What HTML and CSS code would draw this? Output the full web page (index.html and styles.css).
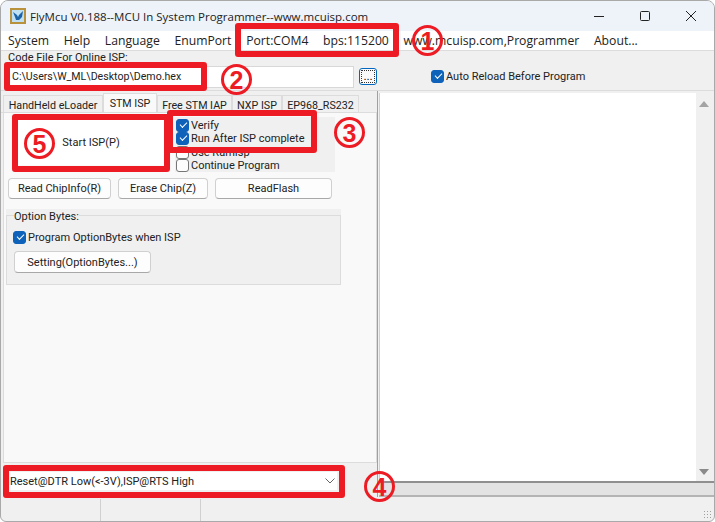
FILE: index.html
```html
<!DOCTYPE html>
<html lang="en">
<head>
  <meta charset="UTF-8">
  <title>FlyMcu</title>
  <link rel="stylesheet" href="styles.css">
</head>
<body>

<div class="window">
  <!-- Title bar -->
  <div class="titlebar">
    <svg class="app-icon" width="16" height="16" viewBox="0 0 16 16">
      <rect x="0" y="0" width="16" height="16" fill="#b8923c"/>
      <rect x="2" y="2" width="12" height="12" fill="#bfe0f2"/>
      <path d="M3 4 L7 7 L8 9 L9 7 L13 3 L12 9 L9 12 L6 12 L5 9 Z" fill="#1c62a8"/>
    </svg>
    <span class="title-text">FlyMcu V0.188--MCU In System Programmer--www.mcuisp.com</span>
    <div class="win-btns">
      <svg width="12" height="12" viewBox="0 0 12 12"><path d="M1 6.5 H11" stroke="#222" fill="none"/></svg>
      <svg width="12" height="12" viewBox="0 0 12 12"><rect x="1.5" y="1.5" width="9" height="9" rx="1" stroke="#222" fill="none"/></svg>
      <svg width="12" height="12" viewBox="0 0 12 12"><path d="M1 1 L11 11 M11 1 L1 11" stroke="#222" fill="none"/></svg>
    </div>
  </div>

  <!-- Menu -->
  <div class="menubar">
    <span>System</span>
    <span>Help</span>
    <span>Language</span>
    <span>EnumPort</span>
    <span>Port:COM4</span>
    <span>bps:115200</span>
    <span>www.mcuisp.com,Programmer</span>
    <span>About...</span>
  </div>

  <!-- Code file -->
  <div class="filebar">
    <div class="file-label">Code File For Online ISP:</div>
    <div class="file-row">
      <div class="file-input">C:\Users\W_ML\Desktop\Demo.hex</div>
      <button class="browse-btn">...</button>
      <label class="check auto-reload"><span class="box on"></span>Auto Reload Before Program</label>
    </div>
  </div>

  <div class="main">
    <div class="left">
      <div class="tabs">
        <div class="tab tab-handheld">HandHeld eLoader</div>
        <div class="tab tab-stm active">STM ISP</div>
        <div class="tab tab-free">Free STM IAP</div>
        <div class="tab tab-nxp">NXP ISP</div>
        <div class="tab tab-ep">EP968_RS232</div>
      </div>
      <div class="tabcontent">
        <div class="isp-row">
          <button class="start-btn">Start ISP(P)</button>
          <div class="isp-checks">
            <label class="check"><span class="box on"></span>Verify</label>
            <label class="check"><span class="box on"></span>Run After ISP complete</label>
            <label class="check"><span class="box"></span>Use RamIsp</label>
            <label class="check"><span class="box"></span>Continue Program</label>
          </div>
        </div>
        <div class="btn-row">
          <button class="btn btn-read">Read ChipInfo(R)</button>
          <button class="btn btn-erase">Erase Chip(Z)</button>
          <button class="btn btn-flash">ReadFlash</button>
        </div>
        <div class="group">
          <fieldset class="group-box">
            <legend>Option Bytes:</legend>
            <label class="check"><span class="box on"></span>Program OptionBytes when ISP</label>
            <button class="btn btn-setting">Setting(OptionBytes...)</button>
          </fieldset>
        </div>
      </div>
      <div class="combo">
        <span>Reset@DTR Low(&lt;-3V),ISP@RTS High</span>
        <svg width="10" height="6" viewBox="0 0 10 6"><path d="M0.5 0.5 L5 5 L9.5 0.5" stroke="#666" fill="none"/></svg>
      </div>
    </div>

    <div class="right">
      <div class="memo">
        <div class="memo-text"></div>
        <div class="scroll">
          <svg width="10" height="6" viewBox="0 0 10 6"><path d="M5 0 L10 6 H0 Z" fill="#a3a3a3"/></svg>
          <svg width="10" height="6" viewBox="0 0 10 6"><path d="M0 0 H10 L5 6 Z" fill="#8a8a8a"/></svg>
        </div>
      </div>
      <div class="hbar"></div>
    </div>
  </div>

  <!-- Status bar -->
  <div class="statusbar">
    <div class="status-cell"></div>
    <div class="status-cell"></div>
    <div class="status-cell last"></div>
    <div class="grip"></div>
  </div>

  <!-- Red annotations on top of the screenshot -->
  <div class="mark mark-port"></div>
  <div class="mark mark-file"></div>
  <div class="mark mark-checks"></div>
  <div class="mark mark-start"></div>
  <div class="mark mark-combo"></div>
  <div class="num num1">1</div>
  <div class="num num2">2</div>
  <div class="num num3">3</div>
  <div class="num num4">4</div>
  <div class="num num5">5</div>
</div>

</body>
</html>
```

FILE: styles.css
```css
* {
  box-sizing: border-box;
}

html, body {
  margin: 0;
  padding: 0;
  background-color: #fff;
}

body {
  font-family: Roboto, Arial, sans-serif;
  font-size: 11px;
  color: #222;
}

.window {
  position: relative;
  width: 715px;
  height: 522px;
  display: flex;
  flex-direction: column;
  overflow: hidden;
  background-color: #f0f0f0;
  border: 1px solid #a9a9a9;
  border-radius: 8px 8px 6px 6px;
}

.titlebar {
  height: 30px;
  display: flex;
  align-items: center;
  padding-left: 9px;
  background-color: #eef2f9;
}

.app-icon {
  margin-right: 4px;
}

.title-text {
  font-family: "Open Sans", sans-serif;
  font-size: 11.5px;
}

.win-btns {
  margin-left: auto;
  display: flex;
  gap: 34px;
  padding-right: 17px;
}

.menubar {
  height: 19px;
  display: flex;
  align-items: center;
  padding-left: 7px;
  background-color: #fff;
  font-family: "Open Sans", sans-serif;
  font-size: 12.2px;
}

.menubar span {
  margin-right: 14.7px;
  white-space: nowrap;
}

.filebar {
  height: 41px;
  border-top: 1px solid #dcdcdc;
  border-bottom: 1px solid #dcdcdc;
  padding-left: 4px;
}

.file-label {
  height: 13px;
  line-height: 13px;
  padding-left: 3px;
  font-size: 11px;
}

.file-row {
  display: flex;
  align-items: center;
  height: 26px;
}

.file-input {
  width: 349px;
  height: 22px;
  line-height: 20px;
  padding-left: 6px;
  background-color: #fff;
  border: 1px solid #d8d8d8;
  font-size: 10.6px;
  white-space: nowrap;
}

.browse-btn {
  width: 18px;
  height: 17px;
  margin: 0 0 2px 5px;
  padding: 0;
  font-size: 11px;
  line-height: 8px;
  background-color: #fafafa;
  border: 1px solid #0067c0;
  border-radius: 3px;
  outline: 1px dotted #333;
  outline-offset: -3px;
}

.check {
  display: flex;
  align-items: center;
  gap: 2px;
  height: 14.3px;
  white-space: nowrap;
}

.box {
  position: relative;
  width: 13px;
  height: 13px;
  flex: none;
  background-color: #fdfdfd;
  border: 1px solid #767676;
  border-radius: 3px;
}

.box.on {
  background-color: #0f62b9;
  border-color: #0f62b9;
}

.box.on::after {
  content: "";
  position: absolute;
  left: 3px;
  top: 2px;
  width: 6px;
  height: 3px;
  border-left: 1px solid #fff;
  border-bottom: 1px solid #fff;
  transform: rotate(-45deg);
}

.auto-reload {
  margin-left: 54px;
}

.main {
  flex: 1;
  display: flex;
  min-height: 0;
}

.left {
  width: 377px;
  flex: none;
  display: flex;
  flex-direction: column;
  border-right: 1px solid #a0a0a0;
}

.tabs {
  height: 22px;
  display: flex;
  align-items: flex-end;
  padding-left: 2px;
  border-bottom: 1px solid #dcdcdc;
}

.tab {
  height: 17px;
  line-height: 20px;
  text-align: center;
  background-color: #f0f0f0;
  border: 1px solid #dcdcdc;
  border-bottom: none;
  white-space: nowrap;
  font-size: 10.7px;
}

.tab.active {
  height: 19px;
  line-height: 19px;
  background-color: #f9f9f9;
}

.tab-handheld {
  width: 100px;
}

.tab-stm {
  width: 54px;
}

.tab-free {
  width: 75px;
}

.tab-nxp {
  width: 50px;
}

.tab-ep {
  width: 77px;
}

.tabcontent {
  height: 350px;
  margin-left: 2px;
  padding: 2px 0 0 2px;
  background-color: #f9f9f9;
  border: 1px solid #dcdcdc;
  border-top: none;
}

.isp-row {
  display: flex;
  align-items: flex-start;
}

.start-btn {
  width: 146px;
  height: 45px;
  margin: 5px 0 0 12px;
  padding: 0;
  background-color: #fff;
  border: none;
  font: inherit;
  color: inherit;
}

.isp-checks {
  width: 160px;
  height: 55px;
  margin: 2px 0 0 11px;
  padding: 2px 0 0 1px;
  display: flex;
  flex-direction: column;
  background-color: #f0f0f0;
}

.btn {
  height: 21px;
  padding: 0;
  background-color: #fdfdfd;
  border: 1px solid #d0d0d0;
  border-bottom-color: #a8a8a8;
  border-radius: 4px;
  font: inherit;
  color: inherit;
}

.btn-row {
  display: flex;
  margin: 6px 0 0 2px;
}

.btn-read {
  width: 103px;
}

.btn-erase {
  width: 90px;
  margin-left: 7px;
}

.btn-flash {
  width: 117px;
  margin-left: 7px;
}

.group {
  width: 335px;
  height: 76px;
  margin-top: 10px;
  background-color: #f0f0f0;
}

.group-box {
  height: 76px;
  margin: 0;
  padding: 0 6px;
  border: 1px solid #dcdcdc;
}

.group-box legend {
  height: 12px;
  line-height: 15px;
  padding: 0;
  margin-left: 1px;
}

.group-box .check {
  margin-top: 9px;
}

.btn-setting {
  display: block;
  width: 137px;
  height: 22px;
  margin: 7px 0 0 1px;
}

.combo {
  width: 327px;
  height: 18px;
  margin: 9px 0 0 9px;
  padding-right: 2px;
  display: flex;
  align-items: center;
  justify-content: space-between;
  background-color: #fff;
}

.right {
  flex: 1;
  display: flex;
  flex-direction: column;
  padding: 2px 0 0 1px;
}

.memo {
  flex: 1;
  display: flex;
  background-color: #fff;
  border-bottom: 2px solid #8f8f8f;
  border-left: 1px solid #d0d0d0;
}

.memo-text {
  flex: 1;
}

.scroll {
  width: 18px;
  flex: none;
  display: flex;
  flex-direction: column;
  justify-content: space-between;
  align-items: center;
  padding: 8px 3px 6px 0;
  background-color: #f0f0f0;
}

.hbar {
  height: 14px;
  flex: none;
  background-color: #e3e3e3;
  border-bottom: 2px solid #b4b4b4;
}

.statusbar {
  position: relative;
  height: 24px;
  display: flex;
  padding-top: 2px;
}

.status-cell {
  width: 100px;
  border-right: 1px solid #d0d0d0;
}

.status-cell.last {
  flex: 1;
  border-right: none;
}

.grip {
  position: absolute;
  right: 1px;
  bottom: 1px;
  width: 10px;
  height: 10px;
  background-image: radial-gradient(#a0a0a0 1px, transparent 1px);
  background-size: 3px 3px;
}

/* annotations */
.mark {
  position: absolute;
  border: 6px solid #ed1c24;
  border-radius: 3px;
}

.mark-port {
  left: 234px;
  top: 22px;
  width: 164px;
  height: 34px;
}

.mark-file {
  left: 3px;
  top: 61px;
  width: 203px;
  height: 29px;
}

.mark-checks {
  left: 166px;
  top: 109px;
  width: 150px;
  height: 43px;
}

.mark-start {
  left: 11px;
  top: 113px;
  width: 158px;
  height: 58px;
}

.mark-combo {
  left: 2px;
  top: 464px;
  width: 342px;
  height: 33px;
}

.num {
  position: absolute;
  width: 31px;
  height: 31px;
  line-height: 26px;
  text-align: center;
  border: 3px solid #ed1c24;
  border-radius: 50%;
  font-family: "Liberation Sans", sans-serif;
  font-size: 25px;
  font-weight: bold;
  color: #ed1c24;
}

.num1 {
  left: 411px;
  top: 24px;
}

.num2 {
  left: 220px;
  top: 63px;
}

.num3 {
  left: 333px;
  top: 116px;
}

.num4 {
  left: 363px;
  top: 470px;
}

.num5 {
  left: 23px;
  top: 127px;
}
```
